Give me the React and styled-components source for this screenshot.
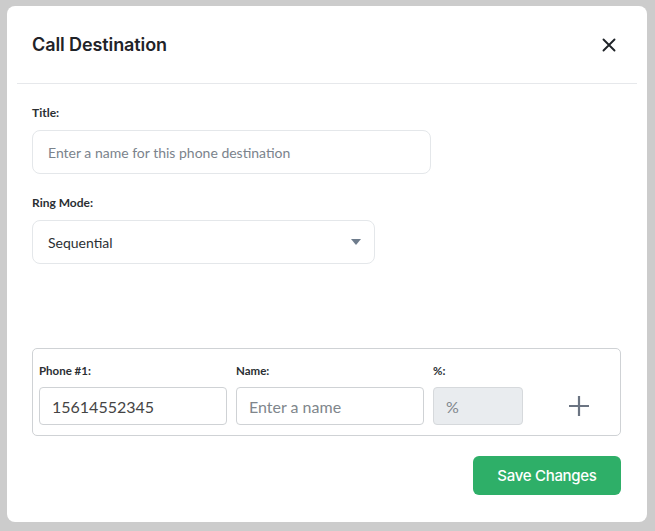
import styled, { createGlobalStyle } from "styled-components";

const GlobalStyle = createGlobalStyle`
    html, body {
        margin: 0;
        padding: 0;
        background: #cccccc;
    }
    * {
        box-sizing: border-box;
    }
`;

export default function App() {
    return (
        <>
            <GlobalStyle />
            <Page>
                <Dialog>
                    <Header>
                        <Title>Call Destination</Title>
                        <CloseButton aria-label="Close">
                            <svg width="14" height="14" viewBox="0 0 14 14">
                                <path d="M1.5 1.5 L12.5 12.5 M12.5 1.5 L1.5 12.5" stroke="#1f2328" strokeWidth="1.9" strokeLinecap="round" />
                            </svg>
                        </CloseButton>
                    </Header>
                    <Divider />
                    <Body>
                        <Label>Title:</Label>
                        <TextInput width="399px" placeholder="Enter a name for this phone destination" />

                        <Label top="22px">Ring Mode:</Label>
                        <SelectBox>
                            <span>Sequential</span>
                            <svg width="10" height="6" viewBox="0 0 10 6">
                                <path d="M0 0 L10 0 L5 6 Z" fill="#6e7c8c" />
                            </svg>
                        </SelectBox>

                        <PhoneBox>
                            <PhoneGrid>
                                <SmallLabel>Phone #1:</SmallLabel>
                                <SmallLabel>Name:</SmallLabel>
                                <SmallLabel>%:</SmallLabel>
                                <span />
                                <RowInput defaultValue="15614552345" />
                                <RowInput placeholder="Enter a name" />
                                <RowInput placeholder="%" disabled />
                                <AddButton aria-label="Add phone">
                                    <svg width="22" height="22" viewBox="0 0 22 22">
                                        <path d="M11 1 L11 21 M1 11 L21 11" stroke="#6b7482" strokeWidth="2.2" />
                                    </svg>
                                </AddButton>
                            </PhoneGrid>
                        </PhoneBox>

                        <Footer>
                            <SaveButton>Save Changes</SaveButton>
                        </Footer>
                    </Body>
                </Dialog>
            </Page>
        </>
    );
}

const Page = styled.div`
    padding: 6px 8px 9px 7px;
`;

const Dialog = styled.div`
    background: #ffffff;
    border-radius: 8px;
    width: 640px;
    padding-bottom: 27px;
`;

const Header = styled.div`
    display: flex;
    align-items: center;
    justify-content: space-between;
    height: 77px;
    padding: 0 31px 0 25px;
`;

const Title = styled.h2`
    margin: 0;
    font-family: "Inter", sans-serif;
    font-size: 18px;
    font-weight: 600;
    letter-spacing: -0.1px;
    color: #1f2328;
`;

const CloseButton = styled.button`
    border: none;
    background: none;
    padding: 0;
    display: flex;
    cursor: pointer;
`;

const Divider = styled.div`
    height: 1px;
    background: #e6e8eb;
    margin: 0 10px;
`;

const Body = styled.div`
    padding: 22px 26px 0 25px;
    display: flex;
    flex-direction: column;
    align-items: flex-start;
`;

const Label = styled.label`
    font-family: "Lato", sans-serif;
    font-size: 12px;
    font-weight: 700;
    line-height: 14px;
    color: #2b2f33;
    margin-top: ${p => p.top || "0"};
    margin-bottom: 10px;
`;

const TextInput = styled.input`
    width: ${p => p.width};
    height: 44px;
    border: 1px solid #e4e7ea;
    border-radius: 8px;
    padding: 0 15px;
    font-family: "Lato", sans-serif;
    font-size: 14px;
    color: #333;
    outline: none;

    &::placeholder {
        color: #7b838c;
    }
`;

const SelectBox = styled.div`
    width: 343px;
    height: 44px;
    border: 1px solid #e4e7ea;
    border-radius: 8px;
    padding: 0 13px 0 15px;
    display: flex;
    align-items: center;
    justify-content: space-between;
    font-family: "Lato", sans-serif;
    font-size: 14px;
    color: #2b2f33;
`;

const PhoneBox = styled.div`
    align-self: stretch;
    margin-top: 84px;
    border: 1px solid #cfd2d5;
    border-radius: 5px;
    padding: 15px 0 10px 6px;
`;

const PhoneGrid = styled.div`
    display: grid;
    grid-template-columns: 188px 188px 90px 1fr;
    column-gap: 9px;
    row-gap: 10px;
    align-items: center;
`;

const SmallLabel = styled.label`
    font-family: "Lato", sans-serif;
    font-size: 11.5px;
    font-weight: 700;
    line-height: 13px;
    color: #2b2f33;
`;

const RowInput = styled.input`
    width: 100%;
    height: 38px;
    border: 1px solid #cfd2d5;
    border-radius: 4px;
    padding: 0 12px;
    font-family: "Lato", sans-serif;
    font-size: 16px;
    color: #444;
    outline: none;
    background: #fff;

    &::placeholder {
        color: #80868c;
    }

    &:disabled {
        background: #e9ecef;
        border-color: #d6d9dc;
    }
`;

const AddButton = styled.button`
    border: none;
    background: none;
    padding: 0;
    display: flex;
    justify-content: center;
    margin-left: 6px;
    cursor: pointer;
`;

const Footer = styled.div`
    align-self: stretch;
    display: flex;
    justify-content: flex-end;
    margin-top: 20px;
`;

const SaveButton = styled.button`
    width: 148px;
    height: 39px;
    border: none;
    border-radius: 6px;
    background: #2eaf68;
    color: #ffffff;
    font-family: "Inter", sans-serif;
    font-size: 15px;
    font-weight: 500;
    letter-spacing: -0.3px;
    cursor: pointer;
`;
